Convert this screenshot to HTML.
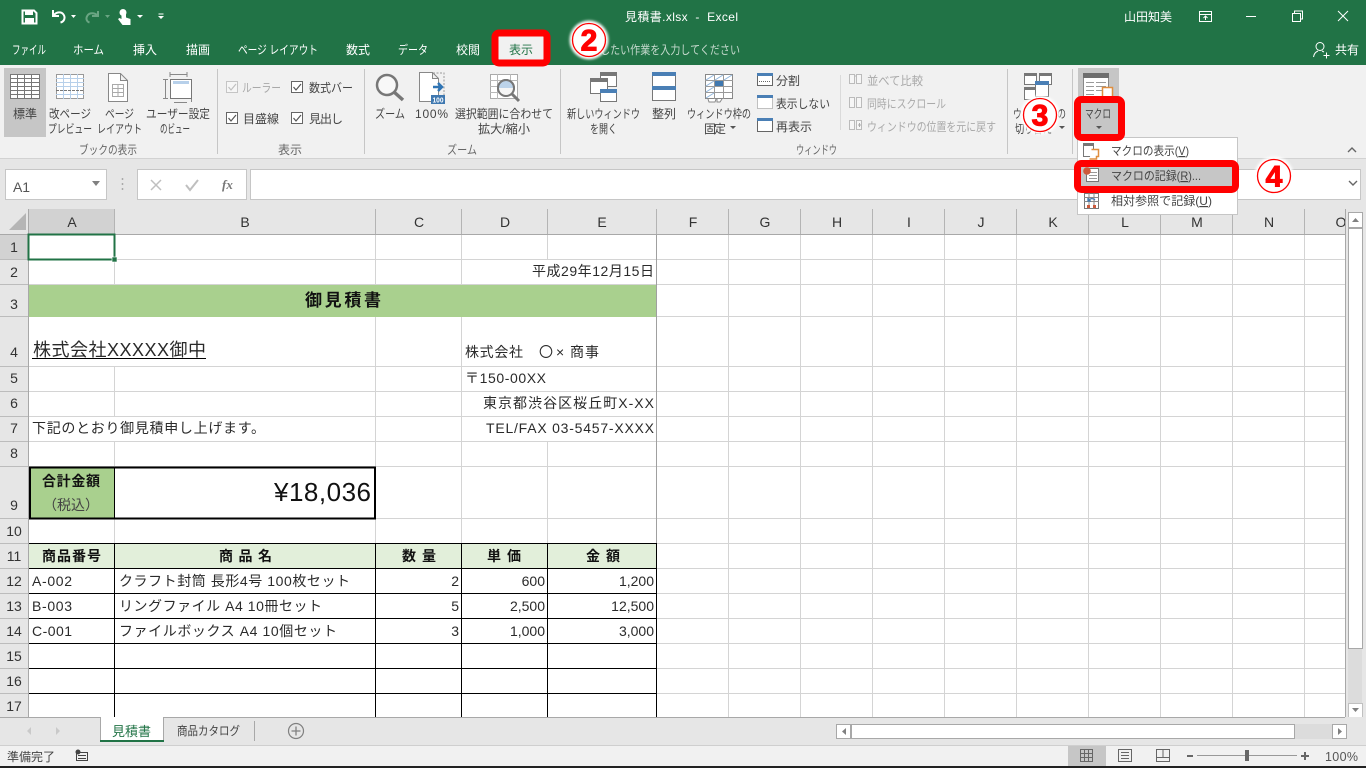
<!DOCTYPE html>
<html lang="ja"><head><meta charset="utf-8"><title>見積書.xlsx - Excel</title>
<style>
html,body{margin:0;padding:0;background:#fff;width:1366px;height:768px;overflow:hidden}
svg{display:block}
text{font-family:"Liberation Sans","Noto Sans CJK JP",sans-serif;white-space:pre}
.w{fill:#fff;font-size:12px}
.r{fill:#444;font-size:12px}
.d{fill:#a9a9a9;font-size:12px}
.c{fill:#2a2a2a;font-size:14px}
.h{fill:#333;font-size:14px;text-anchor:middle}
.b{fill:#111;font-size:14px;font-weight:bold}
.n{fill:#f00;font-size:30px;font-weight:bold;text-anchor:middle;stroke:#f00;stroke-width:1.100;font-family:"Liberation Sans",sans-serif}
</style></head><body>
<svg width="1366" height="768" viewBox="0 0 1366 768" xmlns="http://www.w3.org/2000/svg">
<defs>
<filter id="bl" x="-30%" y="-30%" width="160%" height="160%"><feGaussianBlur stdDeviation="1.2"/></filter>
<clipPath id="colclip"><rect x="0" y="209" width="1345" height="26"/></clipPath>
</defs>

<!-- title bar -->
<rect width="1366" height="65" fill="#217346"/>
<!-- QAT -->
<path d="M22.5 10.5h11.5l2.5 2.5v10.5h-14z" fill="none" stroke="#fff" stroke-width="2"/>
<rect x="25" y="11" width="8" height="4" fill="#fff"/><rect x="25" y="18" width="9" height="5" fill="#fff"/>
<path d="M53 10v6h6M53.5 15.5c3-4 8-4 10-1s1 7-3 8" fill="none" stroke="#fff" stroke-width="2"/>
<path d="M71 15h5l-2.500 3z" fill="#fff"/>
<path d="M98 11v5h-6M97.500 15.500c-3-3-8-3-10 0s-1 6 2 7" fill="none" stroke="#6aa583" stroke-width="2"/>
<path d="M105 15h5l-2.500 3z" fill="#6aa583"/>
<circle cx="123" cy="12.500" r="3.500" fill="#fff"/>
<path d="M121.500 12v7l-2-1-1.500 1 4.500 6h8v-6l-4.500-1.500v-5.500z" fill="#fff"/>
<path d="M137 15h6l-3 3z" fill="#fff"/>
<path d="M158.500 13.500h5v1h-5zM158 16h6l-3 3z" fill="#fff"/>
<text class="w" x="625" y="21" textLength="113">見積書.xlsx  -  Excel</text>
<text class="w" x="1124" y="21" textLength="48">山田知美</text>
<path d="M1199.500 11.500h12v10h-12zM1199.500 14.500h12M1205.500 20v-4M1203.500 18l2-2 2 2" fill="none" stroke="#fff"/>
<rect x="1246" y="16" width="10" height="1" fill="#fff"/>
<path d="M1292.500 13.500h8v8h-8zM1294.500 13.500v-2.500h8v8h-2" fill="none" stroke="#fff"/>
<path d="M1338 11l10 10M1348 11l-10 10" stroke="#fff" fill="none"/>
<!-- tabs -->
<text class="w" x="12" y="54" textLength="34" lengthAdjust="spacingAndGlyphs">ファイル</text>
<text class="w" x="73" y="54" textLength="31" lengthAdjust="spacingAndGlyphs">ホーム</text>
<text class="w" x="133" y="54" textLength="24">挿入</text>
<text class="w" x="186" y="54" textLength="24">描画</text>
<text class="w" x="238" y="54" textLength="80" lengthAdjust="spacingAndGlyphs">ページ レイアウト</text>
<text class="w" x="346" y="54" textLength="24">数式</text>
<text class="w" x="398" y="54" textLength="30" lengthAdjust="spacingAndGlyphs">データ</text>
<text class="w" x="456" y="54" textLength="24">校閲</text>
<text x="580" y="54" textLength="160" lengthAdjust="spacingAndGlyphs" style="font-size:12px;fill:#c5d9cd">実行したい作業を入力してください</text>
<circle cx="1320" cy="46.500" r="4" fill="none" stroke="#fff"/>
<path d="M1313.500 57c.5-3.500 2-5 4.500-6M1322 51l2 1" fill="none" stroke="#fff"/>
<path d="M1323.500 55.500h6M1326.500 52.500v6" stroke="#fff" fill="none"/>
<text class="w" x="1335" y="54" textLength="24">共有</text>

<!-- ribbon -->
<rect y="65" width="1366" height="93" fill="#f1f1f1"/>
<rect y="158" width="1366" height="51" fill="#e6e6e6"/>
<rect y="158" width="1366" height="1" fill="#d2d2d2"/>
<path d="M217.500 69v85M364.500 69v85M560.500 69v85M1007.500 69v85M1072.500 69v85" stroke="#c6c6c6" fill="none"/>
<path d="M840.500 75v55" stroke="#dadada" fill="none"/>

<!-- 標準 -->
<rect x="4" y="68" width="42" height="69" fill="#c6c6c6"/>
<rect x="10.500" y="74.500" width="29" height="24" fill="#fff" stroke="#777"/>
<path d="M10 78.500h30M10 82.500h30M10 86.500h30M10 90.500h30M10 94.500h30M17.500 74v25M24.500 74v25M31.500 74v25" stroke="#777" fill="none"/>
<text class="r" x="13" y="118" textLength="24">標準</text>
<!-- 改ページ -->
<rect x="56.500" y="74.500" width="27" height="24" fill="#fff" stroke="#999"/>
<path d="M56 78.500h28M56 82.500h28M56 86.500h28M56 94.500h28M63.500 74v25M70.500 74v25M77.500 74v25" stroke="#b7d0ea" fill="none"/>
<path d="M56 90.500h28" stroke="#777" stroke-dasharray="3 1" fill="none"/>
<text class="r" x="49" y="118" textLength="42" lengthAdjust="spacingAndGlyphs">改ページ</text>
<text class="r" x="48" y="133" textLength="44" lengthAdjust="spacingAndGlyphs">プレビュー</text>
<!-- ページ -->
<path d="M108.500 73.500h12l7 7v21h-19zM120.500 73.500v7h7" fill="#fff" stroke="#888"/>
<path d="M112.500 84.500h11v12h-11zM112 88.500h12M112 92.500h12M118 84v13" fill="none" stroke="#aaa"/>
<text class="r" x="105" y="118" textLength="29" lengthAdjust="spacingAndGlyphs">ページ</text>
<text class="r" x="97" y="133" textLength="45" lengthAdjust="spacingAndGlyphs">レイアウト</text>
<!-- ユーザー設定 -->
<path d="M165.500 79v20M163 79.500h5M163 98.500h5M170 74.500h17M170 72v5M187 72v5" stroke="#888" fill="none"/>
<rect x="170.500" y="79.500" width="21" height="19" fill="#fff" stroke="#777"/>
<rect x="173" y="81" width="16" height="3" fill="#b7d0ea"/>
<path d="M174 102.500h13M191.500 99v3" stroke="#888" fill="none"/>
<text class="r" x="146" y="118" textLength="64" lengthAdjust="spacingAndGlyphs">ユーザー設定</text>
<text class="r" x="160" y="133" textLength="30" lengthAdjust="spacingAndGlyphs">のビュー</text>
<text x="79" y="154" textLength="58" lengthAdjust="spacingAndGlyphs" style="font-size:12px;fill:#666">ブックの表示</text>

<!-- 表示 -->
<rect x="226.500" y="81.500" width="11" height="11" fill="#f6f6f6" stroke="#c5c5c5"/>
<path d="M228.500 87l2.500 3 5-6" fill="none" stroke="#c0c0c0" stroke-width="1.200"/>
<text class="d" x="242" y="92" textLength="39" lengthAdjust="spacingAndGlyphs">ルーラー</text>
<rect x="291.500" y="81.500" width="11" height="11" fill="#fff" stroke="#666"/>
<path d="M293.500 87l2.500 3 5-6" fill="none" stroke="#555" stroke-width="1.200"/>
<text class="r" x="309" y="92" textLength="44" lengthAdjust="spacingAndGlyphs">数式バー</text>
<rect x="226.500" y="112.500" width="11" height="11" fill="#fff" stroke="#666"/>
<path d="M228.500 118l2.500 3 5-6" fill="none" stroke="#555" stroke-width="1.200"/>
<text class="r" x="243" y="123" textLength="36">目盛線</text>
<rect x="291.500" y="112.500" width="11" height="11" fill="#fff" stroke="#666"/>
<path d="M293.500 118l2.500 3 5-6" fill="none" stroke="#555" stroke-width="1.200"/>
<text class="r" x="309" y="123" textLength="34">見出し</text>
<text x="278" y="154" textLength="24" style="font-size:12px;fill:#666">表示</text>

<!-- ズーム -->
<circle cx="387" cy="85" r="10" fill="#f8f8f8" stroke="#777" stroke-width="2.500"/>
<path d="M394 92l9 8" stroke="#777" stroke-width="3.500" fill="none"/>
<text class="r" x="375" y="118" textLength="30" lengthAdjust="spacingAndGlyphs">ズーム</text>
<path d="M419.500 72.500h13l6 6v23h-19zM432.500 72.500v6h6" fill="#fff" stroke="#888"/>
<path d="M433 73h11v23" fill="none" stroke="#999" stroke-dasharray="2 1.500"/>
<path d="M433 87h9M438 83l4 4-4 4" fill="none" stroke="#2f75b5" stroke-width="2.500"/>
<rect x="431" y="95" width="14" height="9" fill="#3f78b0"/>
<text x="432.500" y="102.500" textLength="11" lengthAdjust="spacingAndGlyphs" style="font-size:7px;font-weight:bold;fill:#fff">100</text>
<text class="r" x="415" y="118" textLength="33" style="font-family:'Liberation Sans',sans-serif">100%</text>
<rect x="490.500" y="74.500" width="27" height="24" fill="#fff" stroke="#aaa"/>
<path d="M490 80.500h28M490 86.500h14M490 92.500h8M497.500 74v25M510.500 74v8" stroke="#b8b8b8" fill="none"/>
<circle cx="506" cy="88" r="8" fill="#bcd3ea" stroke="#777" stroke-width="2"/>
<path d="M498 88h16v3a8 6 0 0 1-16 0z" fill="#f5f5f5"/>
<circle cx="506" cy="88" r="8" fill="none" stroke="#777" stroke-width="2"/>
<path d="M512 94l7 7" stroke="#777" stroke-width="3" fill="none"/>
<text class="r" x="455" y="118" textLength="98" lengthAdjust="spacingAndGlyphs">選択範囲に合わせて</text>
<text class="r" x="478" y="133" textLength="52" lengthAdjust="spacingAndGlyphs">拡大/縮小</text>
<text x="447" y="154" textLength="30" lengthAdjust="spacingAndGlyphs" style="font-size:12px;fill:#666">ズーム</text>

<!-- ウィンドウ -->
<rect x="600.500" y="72.500" width="16" height="14" fill="#fff" stroke="#777"/><rect x="600" y="72" width="17" height="4" fill="#777"/>
<rect x="590.500" y="78.500" width="17" height="15" fill="#fff" stroke="#777"/><rect x="590" y="78" width="18" height="4" fill="#777"/>
<rect x="600.500" y="89.500" width="16" height="12" fill="#fff" stroke="#777"/><rect x="600" y="89" width="17" height="4" fill="#4a7fb5"/>
<text class="r" x="567" y="118" textLength="73" lengthAdjust="spacingAndGlyphs">新しいウィンドウ</text>
<text class="r" x="590" y="133" textLength="27" lengthAdjust="spacingAndGlyphs">を開く</text>
<rect x="652.500" y="72.500" width="23" height="14" fill="#fff" stroke="#777"/><rect x="652" y="72" width="24" height="4" fill="#4a7fb5"/>
<rect x="652.500" y="86.500" width="23" height="14" fill="#fff" stroke="#777"/><rect x="652" y="86" width="24" height="4" fill="#4a7fb5"/>
<text class="r" x="652" y="118" textLength="24">整列</text>
<rect x="705.500" y="74.500" width="27" height="24" fill="#fff" stroke="#888"/>
<path d="M705 80.500h28M705 86.500h28M705 92.500h28M714.500 74v25M723.500 74v25" stroke="#999" fill="none"/>
<rect x="715" y="81" width="8" height="5" fill="#3f78b0"/>
<path d="M706 80l8-5M715 80l8-5M724 80l8-5M706 86l8-5M706 92l8-5M706 98l8-5" stroke="#8db4dc" fill="none"/>
<path d="M708 99l1 3h6l1-3M717 99v3h3l2-3" fill="#fff" stroke="#888"/>
<text class="r" x="687" y="118" textLength="64" lengthAdjust="spacingAndGlyphs">ウィンドウ枠の</text>
<text class="r" x="704" y="133" textLength="22">固定</text>
<path d="M730 126h6l-3 3z" fill="#555"/>
<rect x="757.500" y="73.500" width="15" height="12" fill="#fff" stroke="#666"/><rect x="757" y="73" width="16" height="3" fill="#4a7fb5"/>
<path d="M759 81.500h12" stroke="#666" stroke-dasharray="1 1" fill="none"/>
<text class="r" x="776" y="85" textLength="24">分割</text>
<rect x="757.500" y="96.500" width="15" height="12" fill="#fff" stroke="#888" stroke-dasharray="1 1"/><rect x="757" y="95" width="16" height="3" fill="#4a7fb5"/>
<text class="r" x="776" y="108" textLength="54" lengthAdjust="spacingAndGlyphs">表示しない</text>
<rect x="757.500" y="119.500" width="15" height="12" fill="#fff" stroke="#666"/><rect x="757" y="118" width="16" height="3" fill="#4a7fb5"/>
<text class="r" x="776" y="131" textLength="36">再表示</text>
<path d="M849.500 74.500h5v9h-5zM856.500 74.500h5v9h-5zM854.500 76l2 0" fill="#f6f6f6" stroke="#bbb"/>
<text class="d" x="867" y="85" textLength="56" lengthAdjust="spacingAndGlyphs">並べて比較</text>
<path d="M849.500 97.500h5v10h-5zM856.500 97.500h5v10h-5z" fill="#f6f6f6" stroke="#bbb"/>
<text class="d" x="867" y="108" textLength="79" lengthAdjust="spacingAndGlyphs">同時にスクロール</text>
<path d="M849.500 120.500h5v9h-5zM856.500 120.500h5v9h-5z" fill="#f6f6f6" stroke="#bbb"/>
<path d="M858 125h3M859.500 123v4" stroke="#aaa"/>
<text class="d" x="867" y="131" textLength="129" lengthAdjust="spacingAndGlyphs">ウィンドウの位置を元に戻す</text>
<rect x="1024.500" y="73.500" width="12" height="11" fill="#fff" stroke="#777"/><rect x="1024" y="73" width="13" height="3" fill="#777"/>
<rect x="1039.500" y="73.500" width="12" height="11" fill="#fff" stroke="#777"/><rect x="1039" y="73" width="13" height="3" fill="#777"/>
<rect x="1024.500" y="87.500" width="12" height="12" fill="#fff" stroke="#777"/><rect x="1024" y="87" width="13" height="3" fill="#777"/>
<rect x="1035.500" y="81.500" width="13" height="15" fill="#fff" stroke="#777"/><rect x="1035" y="81" width="14" height="4" fill="#4a7fb5"/>
<text class="r" x="1013" y="118" textLength="53" lengthAdjust="spacingAndGlyphs">ウィンドウの</text>
<text class="r" x="1015" y="133" textLength="37" lengthAdjust="spacingAndGlyphs">切り替え</text>
<path d="M1059 126h6l-3 3z" fill="#555"/>
<text x="796" y="154" textLength="41" lengthAdjust="spacingAndGlyphs" style="font-size:12px;fill:#666">ウィンドウ</text>
<path d="M1348 152l4-4 4 4" fill="none" stroke="#666" stroke-width="1.400"/>

<!-- マクロ -->
<rect x="1078" y="68" width="41" height="69" fill="#c6c6c6"/>
<rect x="1083.500" y="73.500" width="25" height="26" fill="#fff" stroke="#888"/>
<rect x="1083" y="73" width="26" height="5" fill="#6e6e6e"/>
<path d="M1086 82.500h8M1096 82.500h10M1086 86.500h8M1096 86.500h10M1086 90.500h8M1096 90.500h10M1086 94.500h8" stroke="#999" fill="none"/>
<path d="M1102.500 87.500h10v14h-10z" fill="#fff" stroke="#e08e3e" stroke-width="1.500"/>

<!-- formula bar -->
<rect x="5.500" y="169.500" width="101" height="30" fill="#fff" stroke="#c6c6c6"/>
<text x="13" y="192" textLength="17" style="font-size:14px;fill:#555">A1</text>
<path d="M92 181h8l-4 5z" fill="#808080"/>
<path d="M122.500 178v2M122.500 183v2M122.500 188v2" stroke="#aaa" stroke-width="1.500" fill="none"/>
<rect x="137.500" y="169.500" width="109" height="30" fill="#fff" stroke="#c6c6c6"/>
<path d="M151 180l10 10M161 180l-10 10" stroke="#bfbfbf" stroke-width="1.500" fill="none"/>
<path d="M186 185l4 5 8-10" stroke="#bfbfbf" stroke-width="2" fill="none"/>
<text x="222" y="189" style="font-family:'Liberation Serif',serif;font-style:italic;font-weight:bold;font-size:13px;fill:#777">fx</text>
<rect x="250.500" y="169.500" width="1110" height="30" fill="#fff" stroke="#c6c6c6"/>
<path d="M1349 181l4 4 4-4" fill="none" stroke="#666" stroke-width="1.400"/>

<!-- sheet -->
<rect x="0" y="209" width="1366" height="508" fill="#e6e6e6"/>
<rect x="29" y="235" width="1316" height="482" fill="#fff"/>
<path d="M26 213v17h-17z" fill="#b5b5b5"/>
<rect x="29" y="209" width="85" height="25" fill="#d2d2d2"/>
<rect x="0" y="235" width="28" height="24" fill="#d2d2d2"/>
<!-- header separators -->
<path d="M0 234.500h1345M28.500 209v508" stroke="#a8a8a8" fill="none"/>
<path d="M114.500 209v25M375.500 209v25M461.500 209v25M547.500 209v25M656.500 209v25M728.500 209v25M800.500 209v25M872.500 209v25M944.500 209v25M1016.500 209v25M1088.500 209v25M1160.500 209v25M1232.500 209v25M1304.500 209v25" stroke="#b4b4b4" fill="none"/>
<path d="M0 259.500h28M0 284.500h28M0 316.500h28M0 366.500h28M0 391.500h28M0 416.500h28M0 441.500h28M0 466.500h28M0 518.500h28M0 543.500h28M0 568.500h28M0 593.500h28M0 618.500h28M0 643.500h28M0 668.500h28M0 693.500h28" stroke="#bcbcbc" fill="none"/>
<!-- gridlines -->
<path d="M29 259.500h1316M29 284.500h1316M29 316.500h1316M29 366.500h1316M29 391.500h1316M29 416.500h1316M29 441.500h1316M29 466.500h1316M29 518.500h1316M29 543.500h1316M657 568.500h688M657 593.500h688M657 618.500h688M657 643.500h688M657 668.500h688M657 693.500h688" stroke="#d4d4d4" fill="none"/>
<path d="M728.500 235v482M800.500 235v482M872.500 235v482M944.500 235v482M1016.500 235v482M1088.500 235v482M1160.500 235v482M1232.500 235v482M1304.500 235v482" stroke="#d4d4d4" fill="none"/>
<path d="M114.500 235v50M114.500 367v50M114.500 442v25M114.500 519v25M375.500 235v50M375.500 317v150M375.500 519v25M461.500 235v50M461.500 317v227M547.500 235v25M547.500 442v102" stroke="#d4d4d4" fill="none"/>
<path d="M656.500 235v309" stroke="#a0a0a0" fill="none"/>
<path d="M1345.500 209v508" stroke="#a8a8a8" fill="none"/>
<!-- row 3 -->
<rect x="29" y="285" width="628" height="32" fill="#a9d08e"/>
<path d="M656.500 285v32" stroke="#a0a0a0" fill="none"/>
<!-- row 9 -->
<rect x="30" y="468" width="84" height="50" fill="#a9d08e"/>
<rect x="30" y="467.500" width="345" height="51" fill="none" stroke="#000" stroke-width="2"/>
<path d="M114.500 467v51" stroke="#000" fill="none"/>
<!-- table -->
<rect x="29" y="544" width="628" height="24" fill="#e2efda"/>
<path d="M29 543.500h628M29 568.500h628M29 593.500h628M29 618.500h628M29 643.500h628M29 668.500h628M29 693.500h628M114.500 544v173M375.500 544v173M461.500 544v173M547.500 544v173M656.500 544v173" stroke="#000" fill="none"/>
<!-- selection -->
<rect x="28.500" y="234.500" width="86" height="25" fill="none" stroke="#217346" stroke-width="2"/>
<rect x="112" y="257" width="5" height="5" fill="#217346" stroke="#fff" stroke-width=".6"/>

<!-- col heads -->
<g clip-path="url(#colclip)">
<text class="h" x="72" y="227">A</text><text class="h" x="245" y="227">B</text><text class="h" x="419" y="227">C</text><text class="h" x="505" y="227">D</text><text class="h" x="602" y="227">E</text><text class="h" x="693" y="227">F</text><text class="h" x="765" y="227">G</text><text class="h" x="837" y="227">H</text><text class="h" x="909" y="227">I</text><text class="h" x="981" y="227">J</text><text class="h" x="1053" y="227">K</text><text class="h" x="1125" y="227">L</text><text class="h" x="1197" y="227">M</text><text class="h" x="1269" y="227">N</text><text class="h" x="1341" y="227">O</text>
</g>
<!-- row heads -->
<text class="h" x="14" y="252">1</text><text class="h" x="14" y="277">2</text><text class="h" x="14" y="309">3</text><text class="h" x="14" y="357">4</text><text class="h" x="14" y="383">5</text><text class="h" x="14" y="408">6</text><text class="h" x="14" y="433">7</text><text class="h" x="14" y="458">8</text><text class="h" x="14" y="510">9</text><text class="h" x="14" y="536">10</text><text class="h" x="14" y="561">11</text><text class="h" x="14" y="586">12</text><text class="h" x="14" y="611">13</text><text class="h" x="14" y="636">14</text><text class="h" x="14" y="661">15</text><text class="h" x="14" y="686">16</text><text class="h" x="14" y="711">17</text>

<!-- cell text -->
<text class="c" x="532" y="276" textLength="122">平成29年12月15日</text>
<text x="305" y="306" textLength="76" style="font-size:17px;font-weight:bold;fill:#111">御見積書</text>
<text x="33" y="356" textLength="173" style="font-size:18px;fill:#2a2a2a">株式会社XXXXX御中</text>
<rect x="32" y="358" width="174" height="1" fill="#000"/>
<text class="c" x="465" y="357" textLength="58">株式会社</text>
<text class="c" x="539" y="357">〇</text>
<text class="c" x="556" y="357">×</text>
<text class="c" x="570" y="357" textLength="29">商事</text>
<text class="c" x="465" y="383" textLength="81">〒150-00XX</text>
<text class="c" x="483" y="408" textLength="171">東京都渋谷区桜丘町X-XX</text>
<text class="c" x="486" y="433" textLength="168">TEL/FAX 03-5457-XXXX</text>
<text class="c" x="32" y="433" textLength="233">下記のとおり御見積申し上げます。</text>
<text class="b" x="42" y="486" textLength="58">合計金額</text>
<text class="c" x="43" y="510" style="fill:#444">（税込）</text>
<text x="274" y="501" textLength="97" style="font-size:26px;fill:#111">¥18,036</text>
<text class="b" x="42" y="561" textLength="59">商品番号</text>
<text class="b" x="219" y="561" textLength="53">商 品 名</text>
<text class="b" x="402" y="561" textLength="34">数 量</text>
<text class="b" x="487" y="561" textLength="34">単 価</text>
<text class="b" x="586" y="561" textLength="34">金 額</text>
<text class="c" x="32" y="586" textLength="40">A-002</text>
<text class="c" x="119" y="586" textLength="231">クラフト封筒 長形4号 100枚セット</text>
<text class="c" x="459" y="586" text-anchor="end">2</text>
<text class="c" x="545" y="586" text-anchor="end">600</text>
<text class="c" x="654" y="586" text-anchor="end">1,200</text>
<text class="c" x="32" y="611" textLength="40">B-003</text>
<text class="c" x="119" y="611" textLength="203">リングファイル A4 10冊セット</text>
<text class="c" x="459" y="611" text-anchor="end">5</text>
<text class="c" x="545" y="611" text-anchor="end">2,500</text>
<text class="c" x="654" y="611" text-anchor="end">12,500</text>
<text class="c" x="32" y="636" textLength="40">C-001</text>
<text class="c" x="119" y="636" textLength="218">ファイルボックス A4 10個セット</text>
<text class="c" x="459" y="636" text-anchor="end">3</text>
<text class="c" x="545" y="636" text-anchor="end">1,000</text>
<text class="c" x="654" y="636" text-anchor="end">3,000</text>

<!-- vertical scrollbar -->
<rect x="1348" y="212" width="14" height="505" fill="#dcdcdc"/>
<rect x="1348.500" y="212.500" width="14" height="15" fill="#fff" stroke="#a8a8a8"/>
<path d="M1352 222l3.500-4 3.500 4z" fill="#808080"/>
<rect x="1348.500" y="228.500" width="14" height="420" fill="#fff" stroke="#a8a8a8"/>
<rect x="1348.500" y="703.500" width="14" height="14" fill="#fff" stroke="#c0c0c0"/>
<path d="M1352 708h7l-3.500 4z" fill="#808080"/>

<!-- sheet tabs -->
<rect y="717" width="1366" height="28" fill="#e6e6e6"/>
<path d="M0 717.500h100M163 717.500h1182" stroke="#a8a8a8" fill="none"/>
<rect x="100.500" y="717" width="63" height="24" fill="#fff"/>
<path d="M100.500 717v24M163.500 717v24" stroke="#a8a8a8" fill="none"/>
<rect x="100" y="740" width="64" height="2" fill="#217346"/>
<path d="M31 727l-4 4 4 4zM56 727l4 4-4 4z" fill="#c9c9c9"/>
<text x="112" y="736" textLength="39" style="font-size:13px;fill:#217346">見積書</text>
<text x="177" y="735" textLength="63" lengthAdjust="spacingAndGlyphs" style="font-size:12px;fill:#444">商品カタログ</text>
<rect x="254" y="721" width="1" height="20" fill="#a8a8a8"/>
<circle cx="296" cy="731" r="7.500" fill="none" stroke="#808080" stroke-width="1.200"/>
<path d="M291.500 731h9M296 726.500v9" stroke="#808080" stroke-width="1.300" fill="none"/>
<!-- h scrollbar -->
<rect x="836" y="724" width="510" height="15" fill="#dcdcdc"/>
<rect x="836.500" y="724.500" width="14" height="14" fill="#fff" stroke="#a8a8a8"/>
<path d="M846 728v7l-4-3.500z" fill="#808080"/>
<rect x="851.500" y="724.500" width="443" height="14" fill="#fff" stroke="#a8a8a8"/>
<rect x="1332.500" y="724.500" width="14" height="14" fill="#fff" stroke="#a8a8a8"/>
<path d="M1338 728v7l4-3.500z" fill="#808080"/>

<!-- status bar -->
<rect y="745" width="1366" height="21" fill="#f1f1f1"/>
<rect y="745" width="1366" height="1" fill="#cfcfcf"/>
<rect y="766" width="1366" height="2" fill="#222"/>
<text x="7" y="761" textLength="48" style="font-size:12px;fill:#444">準備完了</text>
<circle cx="78" cy="752" r="2.500" fill="#444"/>
<path d="M76.500 752.500h11v8h-11zM78 755.500h8M78 758.500h8" fill="none" stroke="#444"/>
<rect x="1068" y="746" width="38" height="20" fill="#c6c6c6"/>
<path d="M1080.500 749.500h12v12h-12zM1080 753.500h13M1080 757.500h13M1084.500 749v13M1088.500 749v13" fill="none" stroke="#666"/>
<path d="M1118.500 749.500h13v12h-13zM1121 752.500h8M1121 755.500h8M1121 758.500h8" fill="none" stroke="#666"/>
<path d="M1156.500 749.500h13v12h-13zM1156 757.500h14M1163 750v7" fill="none" stroke="#666"/>
<rect x="1187" y="755" width="6" height="2" fill="#666"/>
<rect x="1197" y="755" width="100" height="1" fill="#999"/>
<rect x="1245" y="750" width="4" height="11" fill="#666"/>
<path d="M1301 756h8M1305 752v8" stroke="#666" stroke-width="2" fill="none"/>
<text x="1325" y="761" textLength="33" style="font-size:12.500px;fill:#555">100%</text>

<!-- dropdown menu -->
<rect x="1077.500" y="137.500" width="160" height="77" fill="#fff" stroke="#c6c6c6"/>
<rect x="1081" y="167" width="151" height="19" fill="#c6c6c6"/>
<path d="M1083.500 143.500h10v13h-10z" fill="#fff" stroke="#777"/><rect x="1083" y="143" width="11" height="3" fill="#777"/>
<path d="M1091.500 149.500h7v7h-2v2.500h-7" fill="#fff" stroke="#e08e3e" stroke-width="1.500"/>
<text class="r" x="1111" y="155" textLength="78" lengthAdjust="spacingAndGlyphs">マクロの表示(<tspan text-decoration="underline">V</tspan>)</text>
<path d="M1086.500 168.500h12v13h-12z" fill="#fff" stroke="#777"/>
<path d="M1089 172.500h8M1089 175.500h8M1089 178.500h8" stroke="#999"/>
<text class="r" x="1111" y="180" textLength="90" lengthAdjust="spacingAndGlyphs">マクロの記録(<tspan text-decoration="underline">R</tspan>)...</text>
<rect x="1084.500" y="193.500" width="14" height="15" fill="#fff" stroke="#777"/>
<path d="M1084 197.500h15M1084 201.500h15M1089 193v16M1094 193v16" stroke="#888"/>
<path d="M1087 205h3v3h-3zM1093 205h3v3h-3z" fill="#cc5a3c"/>
<path d="M1095 200c-2-2-5-2-6 1M1088 198v3h3" fill="none" stroke="#3f78b0" stroke-width="1.300"/>
<text class="r" x="1111" y="205" textLength="101" lengthAdjust="spacingAndGlyphs">相対参照で記録(<tspan text-decoration="underline">U</tspan>)</text>

<!-- 表示 tab with red box -->
<rect x="495" y="33" width="52" height="30" rx="4" fill="#f1f1f1" stroke="#f00" stroke-width="7"/>
<text x="509" y="54" textLength="24" style="font-size:12px;fill:#217346">表示</text>
<!-- red boxes -->
<rect x="1077.500" y="99.500" width="44" height="38" rx="4" fill="none" stroke="#f00" stroke-width="7"/>
<text class="r" x="1085" y="118" textLength="26" lengthAdjust="spacingAndGlyphs">マクロ</text>
<path d="M1096 126h6l-3 3z" fill="#555"/>
<rect x="1077.500" y="163.500" width="158" height="26" rx="4" fill="none" stroke="#f00" stroke-width="7"/>
<circle cx="1087" cy="171" r="3.800" fill="#cc5a3c"/>

<!-- numbered badges -->
<g><circle cx="589" cy="40" r="19.500" fill="#fff" filter="url(#bl)"/><circle cx="589" cy="40" r="16.500" fill="#fff" stroke="#f00" stroke-width="1.300"/><text class="n" x="589" y="50.500">2</text></g>
<g><circle cx="1040" cy="115" r="19.500" fill="#fff" filter="url(#bl)"/><circle cx="1040" cy="115" r="16.500" fill="#fff" stroke="#f00" stroke-width="1.300"/><text class="n" x="1040" y="125.500">3</text></g>
<g><circle cx="1274" cy="176" r="19.500" fill="#fff" filter="url(#bl)"/><circle cx="1274" cy="176" r="16.500" fill="#fff" stroke="#f00" stroke-width="1.300"/><text class="n" x="1274" y="186.500">4</text></g>
</svg>
</body></html>
